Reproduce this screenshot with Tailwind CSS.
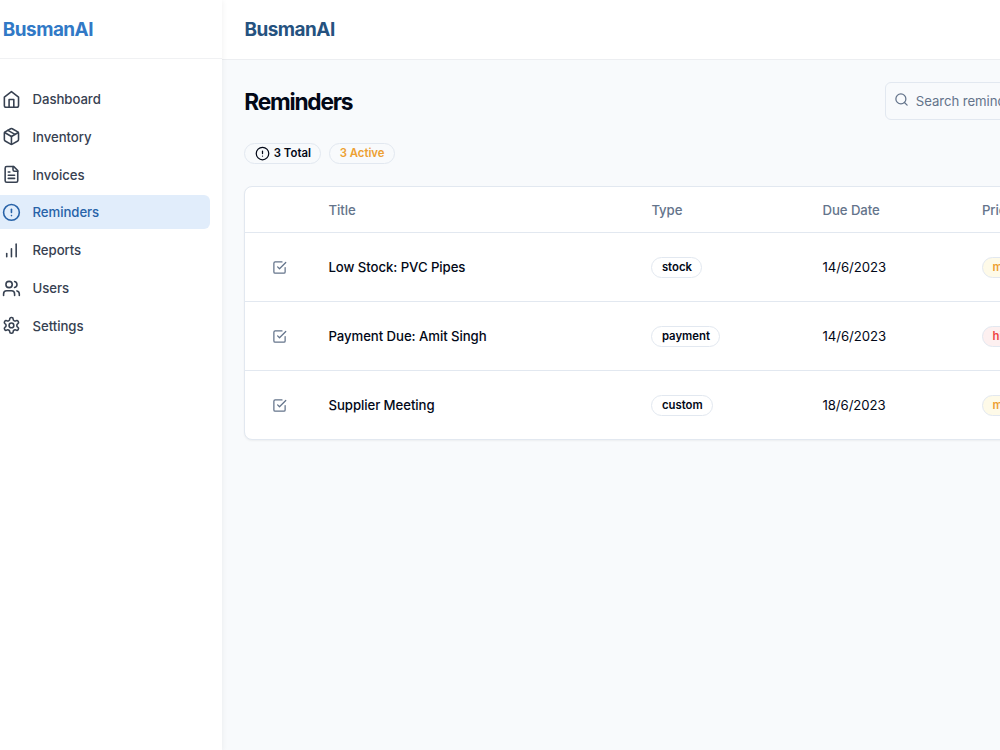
<!DOCTYPE html>
<html lang="en">
  <head>
    <meta charset="UTF-8" />
    <meta name="viewport" content="width=device-width, initial-scale=1.0" />
    <title>BusmanAI - Reminders</title>
    <script src="https://cdn.jsdelivr.net/npm/@tailwindcss/browser@4"></script>
  </head>
  <body class="h-screen overflow-hidden bg-[#f8fafc] font-['Inter',sans-serif] text-[13.2px] tracking-[-0.07px] text-[#020817]">
    <div class="flex h-full">
      <aside class="z-10 h-full w-[222px] shrink-0 bg-white shadow-[0_1px_6px_rgba(0,0,0,0.07)]">
        <div class="flex h-[59px] items-center border-b border-[#f0f1f3] pl-[2.8px]">
          <span class="pt-px text-[18.9px] leading-[26px] font-bold tracking-[-0.5px] text-[#3179c6]">BusmanAI</span>
        </div>
        <nav class="mt-[23px] mr-3 flex flex-col gap-[3.8px] font-medium text-[#374151]">
          <a class="flex h-[34px] items-center gap-[11.3px] pl-[2.4px]" href="#">
            <svg class="size-[18.9px]" viewBox="0 0 24 24" fill="none" stroke="currentColor" stroke-width="2" stroke-linecap="round" stroke-linejoin="round">
              <path d="m3 9 9-7 9 7v11a2 2 0 0 1-2 2H5a2 2 0 0 1-2-2z" />
              <path d="M9 22V12h6v10" />
            </svg>
            <span class="pt-0.5">Dashboard</span>
          </a>
          <a class="flex h-[34px] items-center gap-[11.3px] pl-[2.4px]" href="#">
            <svg class="size-[18.9px]" viewBox="0 0 24 24" fill="none" stroke="currentColor" stroke-width="2" stroke-linecap="round" stroke-linejoin="round">
              <path d="m7.5 4.27 9 5.15" />
              <path d="M21 8a2 2 0 0 0-1-1.73l-7-4a2 2 0 0 0-2 0l-7 4A2 2 0 0 0 3 8v8a2 2 0 0 0 1 1.73l7 4a2 2 0 0 0 2 0l7-4A2 2 0 0 0 21 16Z" />
              <path d="m3.3 7 8.7 5 8.7-5" />
              <path d="M12 22V12" />
            </svg>
            <span class="pt-0.5">Inventory</span>
          </a>
          <a class="flex h-[34px] items-center gap-[11.3px] pl-[2.4px]" href="#">
            <svg class="size-[18.9px]" viewBox="0 0 24 24" fill="none" stroke="currentColor" stroke-width="2" stroke-linecap="round" stroke-linejoin="round">
              <path d="M15 2H6a2 2 0 0 0-2 2v16a2 2 0 0 0 2 2h12a2 2 0 0 0 2-2V7Z" />
              <path d="M14 2v4a2 2 0 0 0 2 2h4" />
              <path d="M10 9H8" />
              <path d="M16 13H8" />
              <path d="M16 17H8" />
            </svg>
            <span class="pt-0.5">Invoices</span>
          </a>
          <a class="flex h-[34px] items-center gap-[11.3px] rounded-r-md bg-[#e1edfb] pl-[2.4px] text-[#2762a8]" href="#">
            <svg class="size-[18.9px]" viewBox="0 0 24 24" fill="none" stroke="currentColor" stroke-width="2" stroke-linecap="round" stroke-linejoin="round">
              <circle cx="12" cy="12" r="10" />
              <path d="M12 8v4" />
              <path d="M12 16h.01" />
            </svg>
            <span class="pt-0.5">Reminders</span>
          </a>
          <a class="flex h-[34px] items-center gap-[11.3px] pl-[2.4px]" href="#">
            <svg class="size-[18.9px]" viewBox="0 0 24 24" fill="none" stroke="currentColor" stroke-width="2" stroke-linecap="round" stroke-linejoin="round">
              <path d="M12 20V10" />
              <path d="M18 20V4" />
              <path d="M6 20v-4" />
            </svg>
            <span class="pt-0.5">Reports</span>
          </a>
          <a class="flex h-[34px] items-center gap-[11.3px] pl-[2.4px]" href="#">
            <svg class="size-[18.9px]" viewBox="0 0 24 24" fill="none" stroke="currentColor" stroke-width="2" stroke-linecap="round" stroke-linejoin="round">
              <path d="M16 21v-2a4 4 0 0 0-4-4H6a4 4 0 0 0-4 4v2" />
              <circle cx="9" cy="7" r="4" />
              <path d="M22 21v-2a4 4 0 0 0-3-3.87" />
              <path d="M16 3.13a4 4 0 0 1 0 7.75" />
            </svg>
            <span class="pt-0.5">Users</span>
          </a>
          <a class="flex h-[34px] items-center gap-[11.3px] pl-[2.4px]" href="#">
            <svg class="size-[18.9px]" viewBox="0 0 24 24" fill="none" stroke="currentColor" stroke-width="2" stroke-linecap="round" stroke-linejoin="round">
              <path d="M12.22 2h-.44a2 2 0 0 0-2 2v.18a2 2 0 0 1-1 1.73l-.43.25a2 2 0 0 1-2 0l-.15-.08a2 2 0 0 0-2.73.73l-.22.38a2 2 0 0 0 .73 2.73l.15.1a2 2 0 0 1 1 1.72v.51a2 2 0 0 1-1 1.74l-.15.09a2 2 0 0 0-.73 2.73l.22.38a2 2 0 0 0 2.73.73l.15-.08a2 2 0 0 1 2 0l.43.25a2 2 0 0 1 1 1.73V20a2 2 0 0 0 2 2h.44a2 2 0 0 0 2-2v-.18a2 2 0 0 1 1-1.73l.43-.25a2 2 0 0 1 2 0l.15.08a2 2 0 0 0 2.73-.73l.22-.39a2 2 0 0 0-.73-2.73l-.15-.08a2 2 0 0 1-1-1.74v-.5a2 2 0 0 1 1-1.74l.15-.09a2 2 0 0 0 .73-2.73l-.22-.38a2 2 0 0 0-2.73-.73l-.15.08a2 2 0 0 1-2 0l-.43-.25a2 2 0 0 1-1-1.73V4a2 2 0 0 0-2-2z" />
              <circle cx="12" cy="12" r="3" />
            </svg>
            <span class="pt-0.5">Settings</span>
          </a>
        </nav>
      </aside>

      <div class="min-w-0 flex-1 overflow-hidden">
        <header class="flex h-[60px] items-center border-b border-[#eceef1] bg-white pl-[22.5px]">
          <span class="text-[18.9px] leading-[26px] font-bold tracking-[-0.5px] text-[#25527f]">BusmanAI</span>
        </header>

        <main class="w-[1000px] pt-[22px] pl-[22.3px]">
          <div class="flex h-[38px] items-center">
            <h1 class="w-[640.5px] pt-0.5 text-[22.7px] font-bold tracking-[-1.22px]">Reminders</h1>
            <div class="flex h-[38px] w-[240px] items-center gap-[6.5px] rounded-md border border-[#e2e8f0] pl-[8.5px] text-[#64748b]">
              <svg class="mb-1 size-[15px]" viewBox="0 0 24 24" fill="none" stroke="currentColor" stroke-width="2" stroke-linecap="round" stroke-linejoin="round">
                <circle cx="11" cy="11" r="8" />
                <path d="m21 21-4.3-4.3" />
              </svg>
              <span class="pt-0.5">Search reminders...</span>
            </div>
          </div>

          <div class="mt-[22.5px] flex gap-[7.5px] text-[11.35px] font-semibold tracking-normal">
            <span class="flex h-[21px] items-center gap-1 rounded-full border border-[#e2e8f0] px-[9.5px]">
              <svg class="size-[15px]" viewBox="0 0 24 24" fill="none" stroke="currentColor" stroke-width="2" stroke-linecap="round" stroke-linejoin="round">
                <circle cx="12" cy="12" r="10" />
                <path d="M12 8v4" />
                <path d="M12 16h.01" />
              </svg>
              <span class="pt-px">3 Total</span>
            </span>
            <span class="flex h-[21px] items-center rounded-full border border-[#e2e8f0] px-[9.7px] pt-px text-[#eda031]">3 Active</span>
          </div>

          <div class="mt-[22.5px] w-[960px] rounded-lg border border-[#e2e8f0] bg-white shadow-xs">
            <div class="grid h-[46px] grid-cols-[83.2px_322.9px_171.1px_159.5px_1fr] items-center border-b border-[#e2e8f0] pt-0.5 font-medium text-[#64748b]">
              <span></span>
              <span>Title</span>
              <span>Type</span>
              <span>Due Date</span>
              <span>Priority</span>
            </div>
            <div class="grid h-[69px] grid-cols-[83.2px_322.9px_171.1px_159.5px_1fr] items-center border-b border-[#e2e8f0]">
              <svg class="ml-[26.5px] size-[15px] text-[#64748b]" viewBox="0 0 24 24" fill="none" stroke="currentColor" stroke-width="2" stroke-linecap="round" stroke-linejoin="round">
                <path d="m9 11 3 3L22 4" />
                <path d="M21 12v7a2 2 0 0 1-2 2H5a2 2 0 0 1-2-2V5a2 2 0 0 1 2-2h11" />
              </svg>
              <span class="pt-0.5 font-medium">Low Stock: PVC Pipes</span>
              <span class="flex h-[21px] w-fit items-center rounded-full border border-[#e2e8f0] px-[9.5px] pt-px text-[11.35px] font-semibold tracking-normal">stock</span>
              <span class="pt-0.5">14/6/2023</span>
              <span class="flex h-[21px] w-fit items-center rounded-full border border-[#e2e8f0] bg-[#fefae8] px-[9.5px] pt-px text-[11.35px] font-semibold tracking-normal text-[#eda031]">medium</span>
            </div>
            <div class="grid h-[69px] grid-cols-[83.2px_322.9px_171.1px_159.5px_1fr] items-center border-b border-[#e2e8f0]">
              <svg class="ml-[26.5px] size-[15px] text-[#64748b]" viewBox="0 0 24 24" fill="none" stroke="currentColor" stroke-width="2" stroke-linecap="round" stroke-linejoin="round">
                <path d="m9 11 3 3L22 4" />
                <path d="M21 12v7a2 2 0 0 1-2 2H5a2 2 0 0 1-2-2V5a2 2 0 0 1 2-2h11" />
              </svg>
              <span class="pt-0.5 font-medium">Payment Due: Amit Singh</span>
              <span class="flex h-[21px] w-fit items-center rounded-full border border-[#e2e8f0] px-[9.5px] pt-px text-[11.35px] font-semibold tracking-normal">payment</span>
              <span class="pt-0.5">14/6/2023</span>
              <span class="flex h-[21px] w-fit items-center rounded-full border border-[#e2e8f0] bg-[#fdf0f0] px-[9.5px] pt-px text-[11.35px] font-semibold tracking-normal text-[#ef4444]">high</span>
            </div>
            <div class="grid h-[68px] grid-cols-[83.2px_322.9px_171.1px_159.5px_1fr] items-center">
              <svg class="ml-[26.5px] size-[15px] text-[#64748b]" viewBox="0 0 24 24" fill="none" stroke="currentColor" stroke-width="2" stroke-linecap="round" stroke-linejoin="round">
                <path d="m9 11 3 3L22 4" />
                <path d="M21 12v7a2 2 0 0 1-2 2H5a2 2 0 0 1-2-2V5a2 2 0 0 1 2-2h11" />
              </svg>
              <span class="pt-0.5 font-medium">Supplier Meeting</span>
              <span class="flex h-[21px] w-fit items-center rounded-full border border-[#e2e8f0] px-[9.5px] pt-px text-[11.35px] font-semibold tracking-normal">custom</span>
              <span class="pt-0.5">18/6/2023</span>
              <span class="flex h-[21px] w-fit items-center rounded-full border border-[#e2e8f0] bg-[#fefae8] px-[9.5px] pt-px text-[11.35px] font-semibold tracking-normal text-[#eda031]">medium</span>
            </div>
          </div>
        </main>
      </div>
    </div>
  </body>
</html>
